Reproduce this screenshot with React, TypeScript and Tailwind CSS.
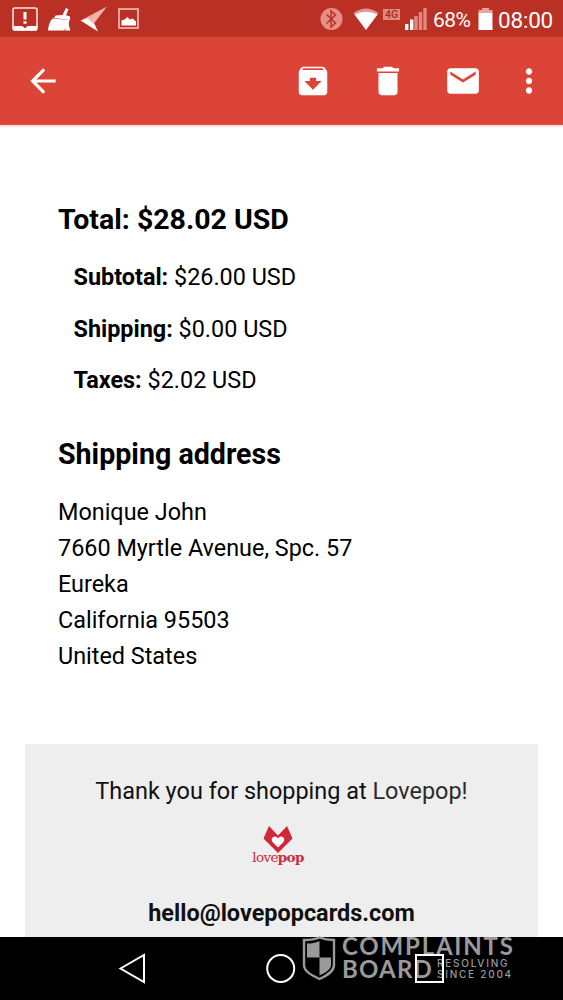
import React from "react";

function StatusBar() {
  return (
    <div className="flex h-[37px] shrink-0 items-center bg-[#bb3024] text-white">
      <svg className="h-[37px] w-[150px]" viewBox="0 0 150 37" fill="none">
        <rect x="13" y="8" width="24" height="22" rx="2" stroke="#fbe6e3" strokeWidth="1.6" />
        <path d="M13 26h8.500q2 0 3.500 2.500 1.500-2.500 3.500-2.500H37v4.500H13z" fill="#fff" />
        <path d="M25 12v7.500M25 21.200v2.600" stroke="#fff" strokeWidth="3" />
        <path d="M66 8l2.500 1.200-2.500 6 4 1.300v3.500L54 18l1.500-2.500 7-.5z" fill="#fff" />
        <path d="M52.500 18.500l17 1.500c-1.500 4 0 7 1 10.500h-5l-.5-2.500-.5 2.500H48c.3-4.500 1.500-9 4.500-12z" fill="#fff" />
        <path d="M107 6.500L80.500 20.500l10-1z" fill="#eba9a2" />
        <path d="M80.500 20.500l11-3 6.500 14z" fill="#fff" />
        <path d="M107 6.500L88 19l5.500 5z" fill="#f0b5af" />
        <rect x="119" y="9" width="19" height="19" stroke="#f4cac5" strokeWidth="1.500" />
        <path d="M121.500 25.500v-5l3-1 3-2.500 2 2.500 3-1 3.500 3v4z" fill="#fff" />
      </svg>
      <svg className="ml-[160px] h-[37px] w-[120px]" viewBox="310 0 120 37" fill="none">
        <circle cx="331.500" cy="19" r="11" fill="#e58f87" />
        <path d="M326.500 14.500l9 8.500-4.500 4V11l4.500 4-9 8.500" stroke="#bb3024" strokeWidth="1.500" />
        <path d="M353.500 13Q366 4 378.500 13L366 29.500z" fill="#e5958d" />
        <path d="M354.500 14.500Q366 9 377.500 14.500L366 30z" fill="#fff" />
        <rect x="383" y="9" width="17" height="11" fill="#e08980" />
        <text x="391.500" y="18.200" textAnchor="middle" fontFamily="Roboto, sans-serif" fontWeight="500" fontSize="10.500" fill="#a92a20">4G</text>
        <path d="M405 24h3.400v6H405zM410 19.500h3.400V30H410z" fill="#fff" />
        <path d="M414.300 16h3.400v14h-3.400zM418.800 12h3.400v18h-3.400zM423.300 8h3.400v22h-3.400z" fill="#e08980" />
      </svg>
      <span className="ml-[3px] mt-[3px] w-[40px] whitespace-nowrap text-[21px] leading-[37px] tracking-[-0.6px]">68%</span>
      <svg className="ml-[4px] h-[37px] w-[18px]" viewBox="477 0 18 37">
        <path d="M482 8h7v2h3.500v3.500h-14V10h3.500z" fill="#e9a49d" />
        <path d="M478.500 13h14v17h-14z" fill="#fff" />
      </svg>
      <span className="ml-[3px] mt-[3px] whitespace-nowrap text-[22.500px] leading-[37px] tracking-[-0.2px]">08:00</span>
    </div>
  );
}

function BarIcon({ d, className }: { d: string; className: string }) {
  return (
    <svg viewBox="0 0 24 24" fill="currentColor" className={`h-[38px] w-[38px] shrink-0 ${className}`}>
      <path d={d} />
    </svg>
  );
}

function AppBar() {
  return (
    <header className="flex h-[88px] shrink-0 items-center border-b border-[#d35449] bg-[#db4437] text-white shadow-[0_1px_3px_rgba(219,68,55,0.35)]">
      <BarIcon className="ml-[24px]" d="M20 11H7.830l5.590-5.590L12 4l-8 8 8 8 1.410-1.410L7.830 13H20v-2z" />
      <BarIcon className="ml-[232px]" d="M20.540 5.230l-1.390-1.680C18.880 3.210 18.470 3 18 3H6c-.47 0-.88.21-1.160.55L3.460 5.230C3.170 5.570 3 6.020 3 6.500V19c0 1.100.9 2 2 2h14c1.100 0 2-.9 2-2V6.500c0-.48-.17-.93-.46-1.270zM12 17.500L6.500 12H10v-2h4v2h3.500L12 17.500zM5.120 5l.81-1h12l.94 1H5.120z" />
      <BarIcon className="ml-[37px]" d="M6 19c0 1.100.9 2 2 2h8c1.100 0 2-.9 2-2V7H6v12zM19 4h-3.500l-1-1h-5l-1 1H5v2h14V4z" />
      <BarIcon className="ml-[37px]" d="M20 4H4c-1.100 0-1.990.9-1.990 2L2 18c0 1.100.9 2 2 2h16c1.100 0 2-.9 2-2V6c0-1.100-.9-2-2-2zm0 4l-8 5-8-5V6l8 5 8-5v2z" />
      <BarIcon className="ml-[28px]" d="M12 8c1.100 0 2-.9 2-2s-.9-2-2-2-2 .9-2 2 .9 2 2 2zm0 2c-1.100 0-2 .9-2 2s.9 2 2 2 2-.9 2-2-.9-2-2-2zm0 6c-1.100 0-2 .9-2 2s.9 2 2 2 2-.9 2-2-.9-2-2-2z" />
    </header>
  );
}

function CostRow({ label, value }: { label: string; value: string }) {
  return (
    <p className="h-[36px] whitespace-nowrap">
      <b>{label}</b> {value}
    </p>
  );
}

function LovepopLogo() {
  return (
    <div className="flex h-[42px] flex-col items-center text-[#cf2a3c]">
      <svg width="30" height="27" viewBox="0 0 30 27">
        <path d="M6 0L15 9.500 24 0 29.500 12.500 15 27 .5 12.500z" fill="#d0273a" />
        <path d="M15 21.500l-5-5c-2.500-2.500-1-6 2-6 1.500 0 2.500 1 3 2 .5-1 1.500-2 3-2 3 0 4.500 3.500 2 6z" fill="#fff" />
      </svg>
      <span className="font-['Roboto_Slab','DejaVu_Serif',serif] mt-[-4px] whitespace-nowrap text-[13.500px] leading-[16px] tracking-[-0.65px]">
        love<b>pop</b>
      </span>
    </div>
  );
}

function Watermark() {
  return (
    <div className="absolute left-[302px] top-[-1px] flex text-[#9a9a9a]">
      <svg width="35" height="45" viewBox="0 0 35 45" fill="none">
        <path d="M17.500 1.500c5 2 9 2.500 14.500 2.500V29c0 6.500-7 10.500-14.500 14C10 39.500 2 35.500 2 29V4c6 0 10.500-.5 15.500-2.500z" stroke="currentColor" strokeWidth="2.400" />
        <path d="M17.500 5v16.500H5V7.500c4.500 0 8.500-.5 12.500-2.500zM17.500 21.500H29V29c0 4-5 7.500-11.500 10.500z" fill="currentColor" />
      </svg>
      <div className="ml-[5px] font-['Lato',sans-serif] font-bold">
        <div className="h-[22px] whitespace-nowrap text-[24px] leading-[20px] tracking-[1.8px]">COMPLAINTS</div>
        <div className="flex h-[23px]">
          <span className="w-[95px] text-[24px] leading-[22px] tracking-[1.2px]">BOARD</span>
          <span className="whitespace-nowrap font-['Inter',sans-serif] text-[10px] font-medium leading-[11px] tracking-[1.750px]">
            RESOLVING<br />SINCE 2004
          </span>
        </div>
      </div>
    </div>
  );
}

function NavigationBar() {
  return (
    <nav className="relative flex h-[63px] shrink-0 bg-black">
      <Watermark />
      <svg className="relative h-[63px] w-[563px]" viewBox="0 937 563 63" fill="none" stroke="#fff" strokeWidth="2">
        <path d="M120.500 968.500L144 955v27z" />
        <circle cx="280.700" cy="968.500" r="13.500" />
        <rect x="416" y="955" width="27" height="27" />
      </svg>
    </nav>
  );
}

export default function App() {
  return (
    <div className="flex h-[1000px] w-[563px] flex-col overflow-hidden bg-white font-['Roboto',sans-serif] text-black">
      <StatusBar />
      <AppBar />
      <main className="flex min-h-0 flex-1 flex-col overflow-hidden text-[23.400px] leading-[36px]">
        <section className="pl-[58px] pt-[77px]">
          <h2 className="whitespace-nowrap text-[28.500px] font-bold">Total: $28.02 USD</h2>
          <div className="mt-[21px] flex flex-col gap-[15.500px] pl-[15.500px]">
            <CostRow label="Subtotal:" value="$26.00 USD" />
            <CostRow label="Shipping:" value="$0.00 USD" />
            <CostRow label="Taxes:" value="$2.02 USD" />
          </div>
          <h2 className="mt-[38px] whitespace-nowrap text-[28.600px] font-bold">Shipping address</h2>
          <address className="mt-[22px] whitespace-nowrap not-italic">
            Monique John<br />7660 Myrtle Avenue, Spc. 57<br />Eureka<br />California 95503<br />United States
          </address>
        </section>
        <footer className="mx-[25px] mt-[70px] flex h-[193px] shrink-0 flex-col items-center bg-[#eeeeee] pt-[29px] text-[#111]">
          <p className="text-[23.450px]">Thank you for shopping at <span className="text-[#2b2b2b]">Lovepop!</span></p>
          <div className="mt-[17px] pr-[7px]"><LovepopLogo /></div>
          <p className="mt-[27px] text-[23.450px] font-bold">hello@lovepopcards.com</p>
        </footer>
      </main>
      <NavigationBar />
    </div>
  );
}
